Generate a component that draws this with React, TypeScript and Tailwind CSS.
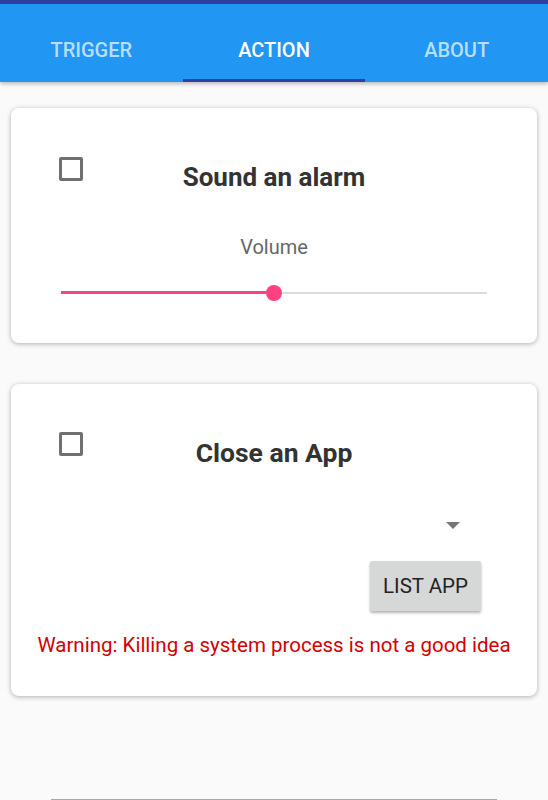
const tabs = ["TRIGGER", "ACTION", "ABOUT"];

function Checkbox() {
  return (
    <span className="block h-6 w-6 shrink-0 rounded-[2px] border-[3px] border-[#707070] bg-white" />
  );
}

function Slider({ value }: { value: number }) {
  return (
    <div className="relative mx-[50px] h-4">
      <div className="absolute left-0 right-0 top-[7px] h-[2px] bg-[#dcdcdc]" />
      <div
        className="absolute left-0 top-[6px] h-[3px] bg-[#ff4081]"
        style={{ width: `${value}%` }}
      />
      <div
        className="absolute top-0 h-4 w-4 -translate-x-1/2 rounded-full bg-[#ff4081]"
        style={{ left: `${value}%` }}
      />
    </div>
  );
}

export default function App() {
  return (
    <div className="min-h-[800px] bg-[#fafafa] font-['Roboto',sans-serif]">
      <header className="relative z-10 bg-[#2196f3] shadow-[0_2px_4px_rgba(0,0,0,0.25)]">
        <div className="h-1 bg-[#303f9f]" />
        <nav className="grid h-[78px] grid-cols-3">
          {tabs.map((tab) => {
            const active = tab === "ACTION";
            return (
              <div key={tab} className="relative flex justify-center pt-[34px]">
                <span
                  className={`text-[20px] font-medium leading-6 ${
                    active ? "text-white" : "text-white/70"
                  }`}
                >
                  {tab}
                </span>
                {active && (
                  <span className="absolute bottom-0 left-0 right-0 h-[3px] bg-[#303f9f]" />
                )}
              </div>
            );
          })}
        </nav>
      </header>

      <main className="px-[11px] pt-[26px]">
        <section className="rounded-lg bg-white pb-[42px] pt-[49px] shadow-[0_1px_5px_rgba(0,0,0,0.3)]">
          <div className="flex items-start px-12">
            <Checkbox />
            <h2 className="mt-[4px] flex-1 text-center text-[26px] font-bold leading-8 text-[#333]">
              Sound an alarm
            </h2>
            <span className="w-6 shrink-0" />
          </div>
          <p className="mt-[42px] text-center text-[20px] leading-6 text-[#666]">
            Volume
          </p>
          <div className="mt-[26px]">
            <Slider value={50} />
          </div>
        </section>

        <section className="mt-[41px] rounded-lg bg-white pb-[39px] pt-12 shadow-[0_1px_5px_rgba(0,0,0,0.3)]">
          <div className="flex items-start px-12">
            <Checkbox />
            <h2 className="mt-[5px] flex-1 text-center text-[26.5px] font-bold leading-8 text-[#333]">
              Close an App
            </h2>
            <span className="w-6 shrink-0" />
          </div>
          <div className="mt-[53px] flex justify-end pr-[77px]">
            <span className="h-0 w-0 border-l-[7px] border-r-[7px] border-t-[7px] border-l-transparent border-r-transparent border-t-[#757575]" />
          </div>
          <div className="mt-[32px] flex justify-end pr-[56px]">
            <button className="h-[50px] w-[111px] rounded-[2px] bg-[#d6d7d7] text-[20.5px] text-[#222] shadow-[0_2px_3px_rgba(0,0,0,0.3)]">
              LIST APP
            </button>
          </div>
          <p className="mt-[22px] text-center text-[20.5px] leading-6 text-[#d50000]">
            Warning: Killing a system process is not a good idea
          </p>
        </section>

        <div className="mx-[40px] mt-[103px] h-px bg-[#a8a8a8]" />
      </main>
    </div>
  );
}
